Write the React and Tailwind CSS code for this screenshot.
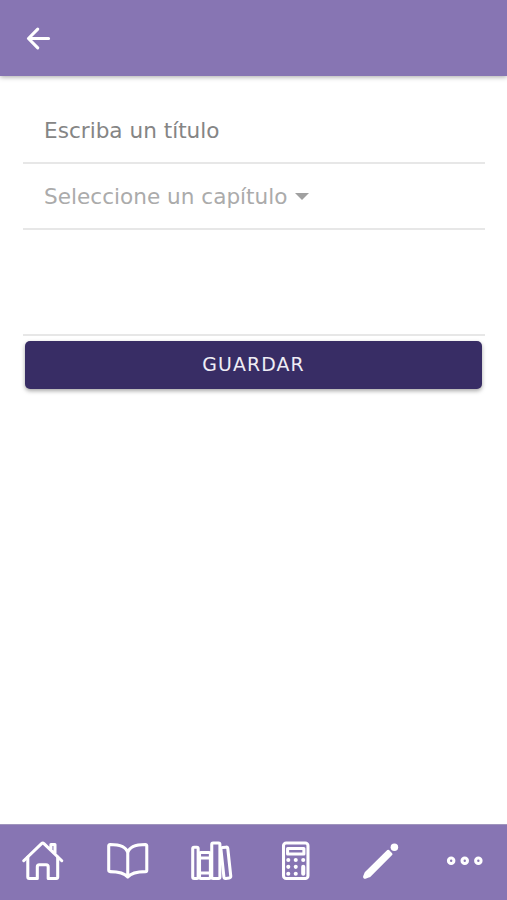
import {
  IoArrowBack,
  IoBookOutline,
  IoCalculatorOutline,
  IoEllipsisHorizontalOutline,
  IoHomeOutline,
  IoLibraryOutline,
} from 'react-icons/io5';

const PencilIcon = ({ size }) => (
  <svg width={size} height={size} viewBox="0 0 44 44" fill="currentColor">
    <path d="M28.6 11.2a1.3 1.3 0 0 1 1.8 0l3.1 3.1a1.3 1.3 0 0 1 0 1.8L11.6 38.1a3 3 0 0 1-1.1.7l-3.9 1.4a1.9 1.9 0 0 1-2.4-2.4L5.6 34.1a3 3 0 0 1 .7-1.1z" />
    <circle cx="35.8" cy="8.4" r="3.8" />
  </svg>
);

const tabs = [
  { id: 'inicio', Icon: IoHomeOutline },
  { id: 'libro', Icon: IoBookOutline },
  { id: 'biblioteca', Icon: IoLibraryOutline },
  { id: 'calculadora', Icon: IoCalculatorOutline },
  { id: 'notas', Icon: PencilIcon },
  { id: 'mas', Icon: IoEllipsisHorizontalOutline },
];

const Header = () => (
  <header className="flex h-[76px] shrink-0 items-center bg-[#8775b3] pl-[22px] shadow-[0_1px_5px_rgba(0,0,0,0.35)]">
    <button className="text-white">
      <IoArrowBack size={33} />
    </button>
  </header>
);

const TabBar = () => (
  <nav className="flex h-[76px] shrink-0 border-t border-[#a095bd] bg-[#8775b3] pb-[3px] pl-px">
    {tabs.map(({ id, Icon }) => (
      <button
        key={id}
        className="flex flex-1 items-center justify-center text-white [&_[stroke-width='32']]:[stroke-width:36px]">
        <Icon size={43.5} />
      </button>
    ))}
  </nav>
);

const App = () => (
  <div className="flex h-screen flex-col bg-white font-['DejaVu_Sans',sans-serif]">
    <Header />
    <main className="flex-1 px-[22.5px] pt-[21px]">
      <div className="flex h-[67px] items-center border-b-2 border-[#e7e7e7] px-[21.5px] pt-[2px]">
        <input
          className="w-full text-[21.6px] leading-6 outline-none placeholder:text-[#858585]"
          placeholder="Escriba un título"
        />
      </div>
      <div className="flex h-[66px] items-center border-b-2 border-[#e7e7e7] px-[21.5px] pt-px text-[21.6px] leading-6 text-[#ababab]">
        <span>Seleccione un capítulo</span>
        <span className="ml-[7.5px] h-0 w-0 border-x-[7px] border-t-[7px] border-x-transparent border-t-[#a0a0a0]" />
      </div>
      <div className="h-[106px] border-b-2 border-[#e7e7e7]" />
      <button className="mx-[2.5px] mt-[5px] flex h-12 w-[457px] items-center justify-center rounded-[5px] bg-[#382d65] pb-[2px] text-[18.9px] tracking-[1.1px] text-[#efedf5] shadow-[0_2px_4px_rgba(0,0,0,0.35)]">
        GUARDAR
      </button>
    </main>
    <TabBar />
  </div>
);

export default App;
